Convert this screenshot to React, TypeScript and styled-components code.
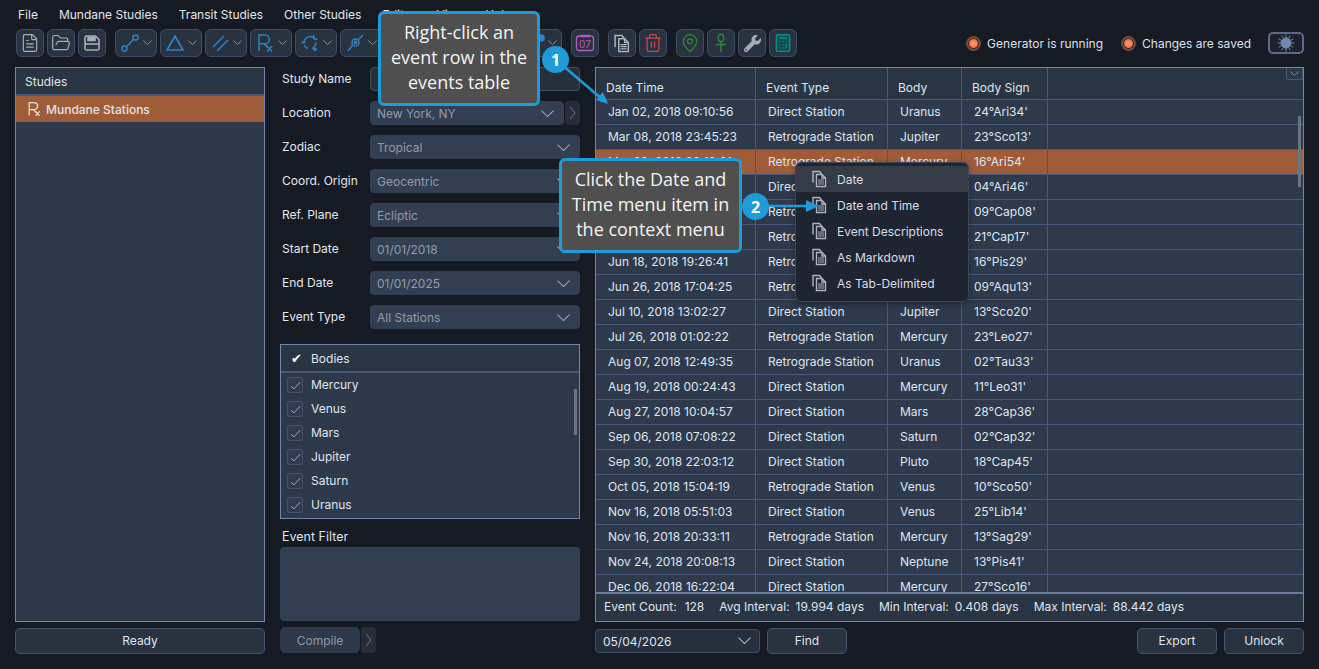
import React from "react";
import styled, { createGlobalStyle } from "styled-components";
import { Calculator, FileText, FolderOpen, MapPin, Trash2 } from "lucide-react";
import { FaWrench } from "react-icons/fa";

const Global = createGlobalStyle`
  html, body { margin: 0; padding: 0; background: #161a23; overflow: hidden; }
  * { box-sizing: border-box; }
  body { font-family: Inter, "Liberation Sans", sans-serif; font-size: 12px; color: #dfe6f0; }
`;

const Page = styled.div`
  position: relative;
  width: 1319px;
  height: 669px;
  padding: 0 15px;
  background: #161a23;
  overflow: hidden;
  display: flex;
  flex-direction: column;
`;

const MenuBar = styled.div`
  height: 29px;
  display: flex;
  align-items: center;
  padding-left: 3px;
  gap: 21px;
  color: #e2e7ef;
`;

const ToolbarRow = styled.div`
  height: 28px;
  display: flex;
  align-items: center;
  padding-left: 1px;
`;

const ToolGroup = styled.div<{ $gap?: number; $after?: number }>`
  display: flex;
  gap: ${(p) => p.$gap ?? 3}px;
  margin-right: ${(p) => p.$after ?? 9}px;
`;

const ToolButton = styled.div<{ $wide?: boolean }>`
  width: ${(p) => (p.$wide ? 42 : 28)}px;
  height: 28px;
  border-radius: 6px;
  border: 1px solid #3f4c63;
  background: #29323f;
  display: flex;
  align-items: center;
  justify-content: ${(p) => (p.$wide ? "flex-start" : "center")};
  padding-left: ${(p) => (p.$wide ? 4 : 0)}px;
  gap: 3px;
`;

const Status = styled.div`
  margin-left: auto;
  display: flex;
  align-items: center;
`;

const Led = styled.span`
  width: 15px;
  height: 15px;
  border-radius: 50%;
  border: 2px solid #6f4c42;
  background: radial-gradient(circle at 50% 50%, #ffa67f 0%, #f4683a 60%, #a8452a 100%);
  box-shadow: inset 0 0 0 1px #33211c;
  margin-right: 6px;
`;

const StatusText = styled.span`
  margin-right: 18px;
  color: #d9e0ec;
`;

const ThemeButton = styled.div`
  width: 36px;
  height: 22px;
  margin-left: -1px;
  border: 2px solid #5b6a8a;
  border-radius: 5px;
  display: flex;
  align-items: center;
  justify-content: center;
  background: #1b202b;
`;

const Columns = styled.div`
  margin-top: 10px;
  display: grid;
  grid-template-columns: 250px 300px 709px;
  gap: 15px;
`;

const Column = styled.div`
  height: 587px;
  display: flex;
  flex-direction: column;
`;

const Panel = styled.div`
  position: relative;
  height: 555px;
  border: 1px solid #7384a8;
  background: #2d394b;
  overflow: hidden;
  display: flex;
  flex-direction: column;
`;

const BottomBar = styled.div`
  height: 26px;
  margin-top: 6px;
  display: flex;
  align-items: center;
`;

const PanelHead = styled.div`
  height: 28px;
  padding-left: 9px;
  display: flex;
  align-items: center;
  background: #2a3543;
  border-bottom: 2px solid #46587a;
  flex: none;
  color: #dfe6f0;
`;

const StudyRow = styled.div`
  height: 26px;
  display: flex;
  align-items: center;
  padding-left: 10px;
  gap: 4px;
  background: #9f5c39;
  font-weight: 500;
  color: #e6e3e3;
`;

const Button = styled.div<{ $w?: string; $dim?: boolean; $after?: number }>`
  width: ${(p) => p.$w ?? "80px"};
  height: 26px;
  margin-right: ${(p) => p.$after ?? 0}px;
  padding-bottom: ${(p) => (p.$dim ? 0 : 2)}px;
  border-radius: 5px;
  border: 1px solid ${(p) => (p.$dim ? "#2d3848" : "#46556f")};
  background: ${(p) => (p.$dim ? "#2d3848" : "#29323f")};
  color: ${(p) => (p.$dim ? "#8f9aaa" : "#dfe6f0")};
  display: flex;
  align-items: center;
  justify-content: center;
`;

const Form = styled.div`
  display: flex;
  flex-direction: column;
  gap: 10px;
`;

const FormRow = styled.div`
  height: 24px;
  display: flex;
  align-items: center;
`;

const FormLabel = styled.span`
  width: 90px;
  padding-left: 2px;
  flex: none;
  margin-top: -2px;
  color: #e2e7ef;
`;

const Field = styled.div<{ $plain?: boolean }>`
  flex: 1;
  height: 24px;
  border-radius: 4px;
  border: 1px solid ${(p) => (p.$plain ? "#3f4f6a" : "#323f52")};
  background: ${(p) => (p.$plain ? "#262f3c" : "#323f52")};
  color: #909bab;
  display: flex;
  align-items: center;
  justify-content: space-between;
  padding: 1px 9px 0 6px;
`;

const SideArrow = styled.div<{ $h?: number; $w?: number }>`
  width: ${(p) => p.$w ?? 15}px;
  height: ${(p) => p.$h ?? 24}px;
  margin-left: 1px;
  border-radius: 4px;
  background: #262c38;
  display: flex;
  align-items: center;
  justify-content: center;
  flex: none;
`;

const Bodies = styled.div`
  position: relative;
  margin-top: 15px;
  height: 175px;
  border: 1px solid #7384a8;
  background: #2d394b;
  overflow: hidden;
`;

const BodiesHead = styled.div`
  height: 28px;
  padding-left: 10px;
  display: flex;
  align-items: center;
  gap: 8px;
  background: #2a3543;
  border-bottom: 2px solid #46587a;
`;

const Bold = styled.span`
  font-family: "DejaVu Sans", sans-serif;
  font-size: 13px;
  color: #fff;
  width: 12px;
`;

const BodyItem = styled.div`
  height: 24px;
  display: flex;
  align-items: center;
  padding-left: 6px;
  gap: 8px;
  color: #dfe6f0;
`;

const BodyName = styled.span`
  margin-top: -2px;
`;

const CheckBox = styled.span`
  width: 16px;
  height: 16px;
  border-radius: 3px;
  border: 1px solid #46556f;
  background: #2f3b4e;
  display: flex;
  align-items: center;
  justify-content: center;
`;

const ScrollThumb = styled.div<{ $x: number; $y: number; $h: number }>`
  position: absolute;
  right: ${(p) => p.$x}px;
  top: ${(p) => p.$y}px;
  width: 3px;
  height: ${(p) => p.$h}px;
  background: #6c7480;
`;

const FilterLabel = styled.div`
  height: 28px;
  padding-left: 2px;
  display: flex;
  align-items: flex-end;
  padding-bottom: 3px;
  font-size: 12.5px;
  color: #dfe6f0;
`;

const FilterBox = styled.div`
  height: 74px;
  border-radius: 4px;
  background: #323f52;
`;

const Grid = styled.div`
  flex: 1;
  overflow: hidden;
`;

const GridRow = styled.div<{ $head?: boolean; $sel?: boolean }>`
  display: grid;
  grid-template-columns: 160px 132px 74px 86px 1fr;
  height: ${(p) => (p.$head ? 32 : 25)}px;
  background: ${(p) => (p.$sel ? "#9f5c39" : p.$head ? "#2a3543" : "#2e3a4c")};
  border-bottom: 1px solid #47587a;
`;

const GridCell = styled.div<{ $head?: boolean }>`
  border-right: 1px solid #47587a;
  padding-left: ${(p) => (p.$head ? 10 : 12)}px;
  padding-top: ${(p) => (p.$head ? 8 : 0)}px;
  padding-bottom: ${(p) => (p.$head ? 0 : 2)}px;
  display: flex;
  align-items: center;
  color: #dfe6f0;
  white-space: nowrap;
  &:last-child { border-right: 0; }
`;

const Collapse = styled.div`
  position: absolute;
  right: 0;
  top: 0;
  width: 17px;
  height: 12px;
  background: #2d3848;
  border: 1px solid #46587a;
  border-top: 0;
  border-radius: 0 0 0 3px;
  display: flex;
  align-items: center;
  justify-content: center;
`;

const Footer = styled.div`
  height: 29px;
  flex: none;
  border-top: 2px solid #6a7ba0;
  background: #2a3543;
  display: flex;
  align-items: center;
  padding: 0 0 2px 8px;
  gap: 15px;
  color: #dfe6f0;
`;

const Stat = styled.span`
  display: inline-flex;
  gap: 6px;
  &:first-child { gap: 8px; }
`;

const DateSelect = styled.div`
  width: 165px;
  height: 24px;
  border-radius: 4px;
  border: 1px solid #3f4c63;
  background: #262f3c;
  display: flex;
  align-items: center;
  justify-content: space-between;
  padding: 0 8px 0 7px;
  margin-right: 7px;
  color: #dfe6f0;
`;

const Spacer = styled.div`
  flex: 1;
`;

const Menu = styled.div`
  position: absolute;
  left: 795px;
  top: 162px;
  width: 174px;
  height: 140px;
  padding-top: 3px;
  background: #1f2530;
  border: 1px solid #3a4558;
  border-radius: 6px;
  box-shadow: 0 2px 6px rgba(0, 0, 0, 0.35);
`;

const MenuItem = styled.div<{ $hover?: boolean }>`
  height: 26px;
  display: flex;
  align-items: center;
  padding-left: 15px;
  gap: 8px;
  background: ${(p) => (p.$hover ? "#363c47" : "transparent")};
  color: #d8dfea;
`;

const Callout = styled.div<{ $x: number; $y: number; $w: number }>`
  position: absolute;
  left: ${(p) => p.$x}px;
  top: ${(p) => p.$y}px;
  width: ${(p) => p.$w}px;
  height: 95px;
  padding-bottom: 3px;
  background: #4f4f4f;
  border: 3px solid #1f9bd8;
  border-radius: 6px;
  color: #f4f4f4;
  font-family: "Open Sans", "Noto Sans", sans-serif;
  font-size: 18px;
  line-height: 25px;
  text-align: center;
  display: flex;
  align-items: center;
  justify-content: center;
`;

const Badge = styled.div<{ $x: number; $y: number }>`
  position: absolute;
  left: ${(p) => p.$x - 13}px;
  top: ${(p) => p.$y - 13}px;
  width: 27px;
  height: 27px;
  border-radius: 50%;
  background: #1f9bd8;
  color: #fff;
  font-family: "Open Sans", sans-serif;
  font-weight: 700;
  font-size: 16px;
  display: flex;
  align-items: center;
  justify-content: center;
`;

const ArrowLayer = styled.svg`
  position: absolute;
  left: 0;
  top: 0;
  pointer-events: none;
`;

const Chevron = ({ size = 12, color = "#9aa5b5" }: { size?: number; color?: string }) => (
  <svg width={size} height={size * 0.6} viewBox="0 0 12 7" fill="none">
    <polyline points="0.5,0.5 6,6 11.5,0.5" stroke={color} strokeWidth="1" />
  </svg>
);

const SmallChevron = () => <Chevron size={9} color="#a2abb8" />;

const RightChevron = () => (
  <svg width="7" height="14" viewBox="0 0 7 14" fill="none">
    <polyline points="1,1 6,7 1,13" stroke="#6e7888" strokeWidth="1" />
  </svg>
);

const BLUE = "#2b83c8";

const Ic = ({ children, w = 20 }: { children: React.ReactNode; w?: number }) => (
  <svg width={w} height={20} viewBox="0 0 20 20" fill="none" stroke={BLUE} strokeWidth="1.5">
    {children}
  </svg>
);

const RxIcon = ({ color = BLUE, size = 20 }: { color?: string; size?: number }) => (
  <svg width={size} height={size} viewBox="0 0 20 20" fill="none" stroke={color} strokeWidth="1.5">
    <path d="M4 18V2h6a4.3 4.3 0 0 1 0 8.8H4M9 10.8l4 4M12 13l5 5.5M17 13l-5 5.5" />
  </svg>
);

const SaveIcon = () => (
  <svg width="18" height="18" viewBox="0 0 18 18" fill="none" stroke="#a6adb7" strokeWidth="1.6">
    <path d="M2 3.5A1.5 1.5 0 0 1 3.5 2h9L16 5.5v9a1.5 1.5 0 0 1-1.5 1.5h-11A1.5 1.5 0 0 1 2 14.5z" />
    <path d="M5 2.5v4h7v-4" fill="#a6adb7" />
    <path d="M2 10h14" />
  </svg>
);

const CalendarIcon = () => (
  <svg width="20" height="20" viewBox="0 0 20 20" fill="none">
    <rect x="1.5" y="3" width="17" height="14.5" rx="2.5" stroke="#b25cc4" strokeWidth="1.3" />
    <path d="M5 3h10" stroke="#b25cc4" strokeWidth="2.4" />
    <text x="10" y="14.8" textAnchor="middle" fontFamily="Inter, sans-serif" fontSize="10" fill="#b25cc4">07</text>
  </svg>
);

const CopyIcon = ({ color = "#aeb5bf", size = 18 }: { color?: string; size?: number }) => (
  <svg width={size} height={size} viewBox="0 0 18 18" fill="none" stroke={color} strokeWidth="1.4">
    <path d="M2 12.5V1.5h6.5l2 2.5" />
    <path d="M5.5 16V4.5h5.5l3.5 3.5V16.5H5.5z" fill="#1f2530" />
    <path d="M11 4.5V8h3.5" />
    <path d="M7 10h6M7 12h6M7 14h6" strokeWidth="1.2" />
  </svg>
);

const AnkhIcon = () => (
  <svg width="18" height="20" viewBox="0 0 18 20" fill="none" stroke="#2f8a38" strokeWidth="1.4">
    <ellipse cx="9" cy="5" rx="2.8" ry="3.6" />
    <path d="M9 8.6V19M4 11.5h10" />
  </svg>
);

const SunIcon = () => (
  <svg width="18" height="18" viewBox="0 0 18 18" stroke="#7486ac" strokeWidth="1">
    <circle cx="9" cy="9" r="5" fill="#7486ac" />
    {Array.from({ length: 12 }).map((_, i) => {
      const a = (i * Math.PI) / 6;
      return <line key={i} x1={9 + 5 * Math.cos(a)} y1={9 + 5 * Math.sin(a)} x2={9 + 8.5 * Math.cos(a)} y2={9 + 8.5 * Math.sin(a)} />;
    })}
  </svg>
);

const dropdownIcons = [
  <Ic key="a"><circle cx="4.5" cy="15.5" r="2.6" /><circle cx="15.5" cy="4.5" r="2.6" /><path d="M6.5 13.5l7-7" /></Ic>,
  <Ic key="b"><path d="M10 3.2L18 17H2z" strokeWidth="1.7" /></Ic>,
  <Ic key="c"><path d="M3 14L14 3M7 18L18 7" /></Ic>,
  <RxIcon key="d" />,
  <Ic key="e"><path d="M4 9a6.5 6.5 0 0 1 11-3.5M16 9.5a6.5 6.5 0 0 1-4 6M8 15.5A6.5 6.5 0 0 1 4 12" /><path d="M14 2v4h3.5M1.5 9.5h4" /><circle cx="15" cy="16.5" r="1.8" fill={BLUE} stroke="none" /></Ic>,
  <Ic key="f"><circle cx="10.5" cy="9.5" r="3.6" /><circle cx="10.5" cy="9.5" r="1.3" fill={BLUE} /><path d="M3 18l4.5-5.8M13.5 6.5L18 2" /></Ic>,
  <Ic key="g"><circle cx="10" cy="10" r="5" /></Ic>,
  <Ic key="h"><path d="M3 17L17 3" /></Ic>,
  <Ic key="i"><circle cx="10" cy="10" r="4" /></Ic>,
  <Ic key="j"><circle cx="16" cy="5" r="3" fill={BLUE} /><circle cx="5" cy="15" r="2.5" /></Ic>,
];

const menuLabels = ["File", "Mundane Studies", "Transit Studies", "Other Studies", "Editor", "View", "Help"];

const formFields = [
  ["Zodiac", "Tropical"],
  ["Coord. Origin", "Geocentric"],
  ["Ref. Plane", "Ecliptic"],
  ["Start Date", "01/01/2018"],
  ["End Date", "01/01/2025"],
  ["Event Type", "All Stations"],
];

const bodies = ["Mercury", "Venus", "Mars", "Jupiter", "Saturn", "Uranus"];

const DS = "Direct Station";
const RS = "Retrograde Station";
const events: [string, string, string, string][] = [
  ["Jan 02, 2018 09:10:56", DS, "Uranus", "24°Ari34'"],
  ["Mar 08, 2018 23:45:23", RS, "Jupiter", "23°Sco13'"],
  ["Mar 22, 2018 23:19:01", RS, "Mercury", "16°Ari54'"],
  ["Apr 15, 2018 09:20:43", DS, "Mercury", "04°Ari46'"],
  ["Apr 17, 2018 20:46:47", RS, "Saturn", "09°Cap08'"],
  ["Apr 22, 2018 03:14:30", RS, "Pluto", "21°Cap17'"],
  ["Jun 18, 2018 19:26:41", RS, "Neptune", "16°Pis29'"],
  ["Jun 26, 2018 17:04:25", RS, "Mars", "09°Aqu13'"],
  ["Jul 10, 2018 13:02:27", DS, "Jupiter", "13°Sco20'"],
  ["Jul 26, 2018 01:02:22", RS, "Mercury", "23°Leo27'"],
  ["Aug 07, 2018 12:49:35", RS, "Uranus", "02°Tau33'"],
  ["Aug 19, 2018 00:24:43", DS, "Mercury", "11°Leo31'"],
  ["Aug 27, 2018 10:04:57", DS, "Mars", "28°Cap36'"],
  ["Sep 06, 2018 07:08:22", DS, "Saturn", "02°Cap32'"],
  ["Sep 30, 2018 22:03:12", DS, "Pluto", "18°Cap45'"],
  ["Oct 05, 2018 15:04:19", RS, "Venus", "10°Sco50'"],
  ["Nov 16, 2018 05:51:03", DS, "Venus", "25°Lib14'"],
  ["Nov 16, 2018 20:33:11", RS, "Mercury", "13°Sag29'"],
  ["Nov 24, 2018 20:08:13", DS, "Neptune", "13°Pis41'"],
  ["Dec 06, 2018 16:22:04", DS, "Mercury", "27°Sco16'"],
];

const menuItems = ["Date", "Date and Time", "Event Descriptions", "As Markdown", "As Tab-Delimited"];

const stats = [
  ["Event Count:", "128"],
  ["Avg Interval:", "19.994 days"],
  ["Min Interval:", "0.408 days"],
  ["Max Interval:", "88.442 days"],
];

export default function App() {
  return (
    <Page>
      <Global />
      <MenuBar>
        {menuLabels.map((m) => (
          <span key={m}>{m}</span>
        ))}
      </MenuBar>
      <ToolbarRow>
        <ToolGroup>
          <ToolButton><FileText size={20} color="#a6adb7" strokeWidth={1.4} /></ToolButton>
          <ToolButton><FolderOpen size={20} color="#a6adb7" strokeWidth={1.4} /></ToolButton>
          <ToolButton><SaveIcon /></ToolButton>
        </ToolGroup>
        <ToolGroup>
          {dropdownIcons.map((ic, i) => (
            <ToolButton $wide key={i}>
              {ic}
              <SmallChevron />
            </ToolButton>
          ))}
        </ToolGroup>
        <ToolGroup>
          <ToolButton><CalendarIcon /></ToolButton>
        </ToolGroup>
        <ToolGroup>
          <ToolButton><CopyIcon size={19} /></ToolButton>
          <ToolButton><Trash2 size={20} color="#c44a4e" strokeWidth={1.5} /></ToolButton>
        </ToolGroup>
        <ToolGroup $after={0}>
          <ToolButton><MapPin size={20} color="#2f8a38" strokeWidth={1.5} /></ToolButton>
          <ToolButton><AnkhIcon /></ToolButton>
          <ToolButton><FaWrench size={17} color="#a6adb7" /></ToolButton>
          <ToolButton><Calculator size={20} color="#0e8d85" strokeWidth={1.7} fill="#0c4f50" /></ToolButton>
        </ToolGroup>
        <Status>
          <Led />
          <StatusText>Generator is running</StatusText>
          <Led />
          <StatusText>Changes are saved</StatusText>
          <ThemeButton><SunIcon /></ThemeButton>
        </Status>
      </ToolbarRow>

      <Columns>
        <Column>
          <Panel>
            <PanelHead>Studies</PanelHead>
            <StudyRow>
              <RxIcon color="#e6e3e3" size={16} />
              Mundane Stations
            </StudyRow>
          </Panel>
          <BottomBar>
            <Button $w="250px">Ready</Button>
          </BottomBar>
        </Column>

        <Column>
          <Form>
            <FormRow>
              <FormLabel>Study Name</FormLabel>
              <Field $plain />
            </FormRow>
            <FormRow>
              <FormLabel>Location</FormLabel>
              <Field>
                New York, NY
                <Chevron size={13} />
              </Field>
              <SideArrow><RightChevron /></SideArrow>
            </FormRow>
            {formFields.map(([label, value]) => (
              <FormRow key={label}>
                <FormLabel>{label}</FormLabel>
                <Field>
                  {value}
                  <Chevron size={13} />
                </Field>
              </FormRow>
            ))}
          </Form>
          <Bodies>
            <BodiesHead>
              <Bold>✔</Bold>
              Bodies
            </BodiesHead>
            {bodies.map((b) => (
              <BodyItem key={b}>
                <CheckBox>
                  <svg width="11" height="9" viewBox="0 0 11 9" fill="none">
                    <polyline points="1,5 4,8 10,1" stroke="#98a2b1" strokeWidth="1" />
                  </svg>
                </CheckBox>
                <BodyName>{b}</BodyName>
              </BodyItem>
            ))}
            <ScrollThumb $x={2} $y={44} $h={46} />
          </Bodies>
          <FilterLabel>Event Filter</FilterLabel>
          <FilterBox />
          <BottomBar>
            <Button $w="80px" $dim>Compile</Button>
            <SideArrow $h={26} $w={15}><RightChevron /></SideArrow>
          </BottomBar>
        </Column>

        <Column>
          <Panel>
            <Grid>
              <GridRow $head>
                {["Date Time", "Event Type", "Body", "Body Sign", ""].map((h, i) => (
                  <GridCell $head key={i}>{h}</GridCell>
                ))}
              </GridRow>
              {events.map((e, i) => (
                <GridRow key={e[0]} $sel={i === 2}>
                  {e.map((c, j) => (
                    <GridCell key={j}>{c}</GridCell>
                  ))}
                  <GridCell />
                </GridRow>
              ))}
            </Grid>
            <Footer>
              {stats.map(([k, v]) => (
                <Stat key={k}>
                  <span>{k}</span>
                  <span>{v}</span>
                </Stat>
              ))}
            </Footer>
            <Collapse><SmallChevron /></Collapse>
            <ScrollThumb $x={2} $y={48} $h={71} />
          </Panel>
          <BottomBar>
            <DateSelect>
              05/04/2026
              <Chevron size={13} color="#b4bcc8" />
            </DateSelect>
            <Button>Find</Button>
            <Spacer />
            <Button $after={7}>Export</Button>
            <Button>Unlock</Button>
          </BottomBar>
        </Column>
      </Columns>

      <Menu>
        {menuItems.map((m, i) => (
          <MenuItem key={m} $hover={i === 0}>
            <CopyIcon size={18} />
            {m}
          </MenuItem>
        ))}
      </Menu>

      <ArrowLayer width="1319" height="669">
        <line x1="555" y1="59" x2="602" y2="99" stroke="#1f9bd8" strokeWidth="2.6" />
        <polygon points="608,104 596,100 603,92" fill="#1f9bd8" />
        <line x1="755" y1="206" x2="808" y2="206" stroke="#1f9bd8" strokeWidth="2.6" />
        <polygon points="819,206 806,200 806,212" fill="#1f9bd8" />
      </ArrowLayer>

      <Callout $x={378} $y={11} $w={162}>
        Right-click an
        <br />
        event row in the
        <br />
        events table
      </Callout>
      <Callout $x={559} $y={158} $w={183}>
        Click the Date and
        <br />
        Time menu item in
        <br />
        the context menu
      </Callout>
      <Badge $x={555} $y={59}>1</Badge>
      <Badge $x={755} $y={206}>2</Badge>
    </Page>
  );
}
